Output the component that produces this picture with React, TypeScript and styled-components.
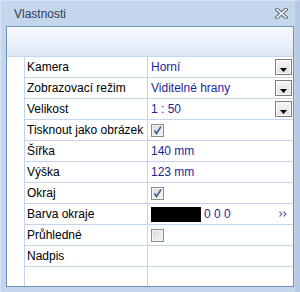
import React from "react";
import styled, { createGlobalStyle } from "styled-components";

const GlobalStyle = createGlobalStyle`
  html, body {
    margin: 0;
    padding: 0;
  }
  body {
    font-family: "Liberation Sans", Arial, sans-serif;
    font-size: 12px;
  }
`;

const Window = styled.div`
  width: 300px;
  height: 292px;
  box-sizing: border-box;
  background-color: #c4d6ec;
  border-left: 1px solid #d6e4f5;
  border-top: 1px solid #d6e4f5;
  border-right: 5px solid #b5cae6;
  display: flex;
  flex-direction: column;
`;

const TitleBar = styled.div`
  height: 25px;
  display: flex;
  align-items: center;
  justify-content: space-between;
  padding: 0 7px 0 13px;
  color: #2d3c56;
  font-size: 12px;
`;

const CloseButton = styled.button`
  border: none;
  background: none;
  padding: 0;
  width: 13px;
  height: 11px;
  display: flex;
  align-items: center;
  justify-content: center;
  cursor: pointer;
`;

const Panel = styled.div`
  margin: 0 1px 5px 5px;
  flex: 1;
  border: 1px solid #7290b7;
  background: #ffffff;
  display: flex;
  flex-direction: column;
`;

const Toolbar = styled.div`
  height: 29px;
  border-bottom: 1px solid #c3d5ee;
  background: linear-gradient(to bottom, #f6f9fe 0%, #e9f0fa 60%, #dde7f5 100%);
`;

const Body = styled.div`
  flex: 1;
  display: flex;
`;

const Gutter = styled.div`
  width: 17px;
  border-right: 1px solid #c3d5ee;
`;

const Table = styled.div`
  flex: 1;
  display: flex;
  flex-direction: column;
`;

const Row = styled.div<{ $last?: boolean }>`
  display: flex;
  height: ${(p) => (p.$last ? "auto" : "20px")};
  flex: ${(p) => (p.$last ? 1 : "none")};
  border-bottom: ${(p) => (p.$last ? "none" : "1px solid #c3d5ee")};
`;

const NameCell = styled.div`
  width: 120px;
  padding-left: 2px;
  border-right: 1px solid #c3d5ee;
  display: flex;
  align-items: center;
  color: #000000;
  white-space: nowrap;
`;

const ValueCell = styled.div`
  flex: 1;
  padding: 0 1px 0 3px;
  display: flex;
  align-items: center;
  color: #1f1f95;
  white-space: nowrap;
`;

const ValueText = styled.span`
  flex: 1;
`;

const DropButton = styled.div`
  width: 15px;
  height: 14px;
  border: 1px solid #7b7b7b;
  box-shadow: inset 0 0 0 1px #ffffff;
  background: linear-gradient(to bottom, #f4f4f4, #e2e2e2);
  display: flex;
  align-items: flex-end;
  justify-content: center;
  box-sizing: content-box;
`;

const CheckBox = styled.div`
  width: 11px;
  height: 11px;
  border: 1px solid #8c8e91;
  box-shadow: inset 0 0 0 1px #f4f4f4;
  background: linear-gradient(135deg, #d6d8db, #f5f6f7);
  display: flex;
  align-items: center;
  justify-content: center;
`;

const Swatch = styled.div`
  width: 50px;
  height: 15px;
  background: #000000;
  margin-right: 3px;
`;

const MoreIcon = styled.div`
  margin-left: auto;
  margin-right: 5px;
  display: flex;
`;

const DropArrow = () => (
  <svg width="9" height="9" viewBox="0 0 9 9">
    <path d="M1 3 H8 L4.5 7 Z" fill="#000000" />
  </svg>
);

const Check = () => (
  <svg width="11" height="11" viewBox="0 0 11 11">
    <path
      d="M2.5 5.5 L4.5 8.5 L9 1.5"
      fill="none"
      stroke="#4a5c93"
      strokeWidth="1.6"
    />
  </svg>
);

const Dropdown: React.FC<{ value: string }> = ({ value }) => (
  <>
    <ValueText>{value}</ValueText>
    <DropButton>
      <DropArrow />
    </DropButton>
  </>
);

interface Property {
  name: string;
  value?: React.ReactNode;
}

const properties: Property[] = [
  { name: "Kamera", value: <Dropdown value="Horní" /> },
  { name: "Zobrazovací režim", value: <Dropdown value="Viditelné hrany" /> },
  { name: "Velikost", value: <Dropdown value="1 : 50" /> },
  {
    name: "Tisknout jako obrázek",
    value: (
      <CheckBox>
        <Check />
      </CheckBox>
    ),
  },
  { name: "Šířka", value: "140 mm" },
  { name: "Výška", value: "123 mm" },
  {
    name: "Okraj",
    value: (
      <CheckBox>
        <Check />
      </CheckBox>
    ),
  },
  {
    name: "Barva okraje",
    value: (
      <>
        <Swatch />
        <span>0 0 0</span>
        <MoreIcon>
          <svg width="8" height="6" viewBox="0 0 8 6">
            <path
              d="M0.5 0.5 L3 3 L0.5 5.5 M4.5 0.5 L7 3 L4.5 5.5"
              fill="none"
              stroke="#6f6fb0"
              strokeWidth="1.2"
            />
          </svg>
        </MoreIcon>
      </>
    ),
  },
  { name: "Průhledné", value: <CheckBox /> },
  { name: "Nadpis" },
];

export default function App() {
  return (
    <>
      <GlobalStyle />
      <Window>
        <TitleBar>
          <span>Vlastnosti</span>
          <CloseButton aria-label="Zavřít">
            <svg width="13" height="11" viewBox="0 0 13 11">
              <path
                d="M2 1.5 L11 9.5 M11 1.5 L2 9.5"
                stroke="#5b6675"
                strokeWidth="3.6"
                strokeLinecap="square"
              />
              <path
                d="M2 1.5 L11 9.5 M11 1.5 L2 9.5"
                stroke="#ffffff"
                strokeWidth="1.6"
                strokeLinecap="square"
              />
            </svg>
          </CloseButton>
        </TitleBar>
        <Panel>
          <Toolbar />
          <Body>
            <Gutter />
            <Table>
              {properties.map((p) => (
                <Row key={p.name}>
                  <NameCell>{p.name}</NameCell>
                  <ValueCell>{p.value}</ValueCell>
                </Row>
              ))}
              <Row $last>
                <NameCell />
                <ValueCell />
              </Row>
            </Table>
          </Body>
        </Panel>
      </Window>
    </>
  );
}
